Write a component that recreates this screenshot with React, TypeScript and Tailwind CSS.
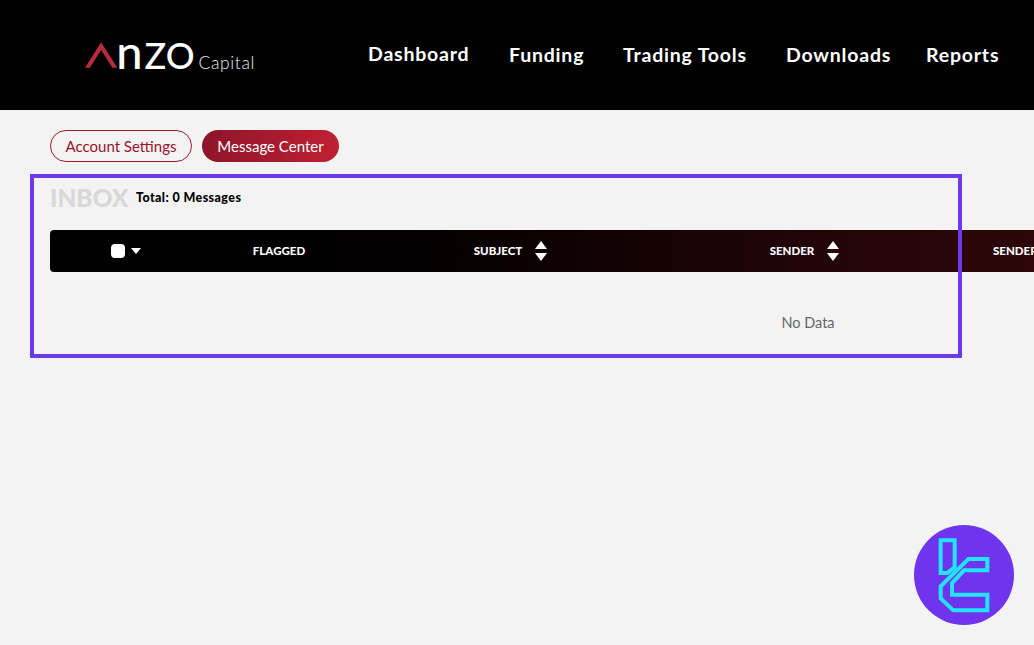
import React from 'react';

const font = { fontFamily: 'Lato, "Noto Sans", sans-serif' };

const navItems = [
  { label: 'Dashboard', className: 'w-[102px] -mt-[2px]' },
  { label: 'Funding', className: 'w-[74px] ml-[39px]' },
  { label: 'Trading Tools', className: 'w-[125px] ml-[40px]' },
  { label: 'Downloads', className: 'w-[104px] ml-[38px] -mt-[1px]' },
  { label: 'Reports', className: 'w-[72px] ml-[36px] -mt-[1px]' },
];

const SortArrows = () => (
  <svg width="14" height="20" viewBox="0 0 14 20" className="ml-3">
    <path d="M7 0 L13 8 L1 8 Z M1 12 L13 12 L7 20 Z" fill="#fff" />
  </svg>
);

const Logo = () => (
  <div className="flex items-baseline w-[170px] ml-[85px] mt-[-9px] h-[50px] text-white">
    <svg width="33" height="26" viewBox="0 0 33 26" className="self-end mb-[8px]">
      <path d="M0 26 L16.5 0 L33 26 L28 26 L16.5 8 L5 26 Z" fill="#b92a3c" />
    </svg>
    <span className="ml-[-1px] text-[47px] leading-[50px] font-medium">n</span>
    <span className="ml-[2px] text-[36px] leading-[50px] font-medium">ZO</span>
    <span className="ml-[4px] text-[17.5px] leading-[50px] font-light text-[#efefef] tracking-[0.6px]">Capital</span>
  </div>
);

const Badge = () => (
  <svg width="100" height="100" viewBox="42 30 300 300" className="absolute left-[914px] top-[525px]">
    <circle cx="192" cy="180" r="150" fill="#6f35ee" />
    <g fill="none" stroke="#22e4ff" strokeWidth="12">
      <path d="M122 76 L164 76 L164 156 L142 174 L122 174 Z" />
      <path d="M205 132 L262 132 L262 166 L192 166 L156 204 L156 239 L262 239 L262 286 L160 286 L122 250 L122 214 Z" />
    </g>
  </svg>
);

export default function App() {
  return (
    <div className="relative w-[1034px] h-[645px] overflow-hidden bg-[#f3f3f3]" style={font}>
      <header className="flex items-center h-[110px] bg-black">
        <Logo />
        <nav className="flex items-center ml-[113px] text-white text-[19.5px] font-bold tracking-[0.8px] whitespace-nowrap">
          {navItems.map(item => (
            <a key={item.label} className={item.className}>{item.label}</a>
          ))}
        </nav>
      </header>

      <main className="pl-[50px]">
        <div className="flex gap-[10px] pt-5">
          <button className="w-[142px] h-8 rounded-full border border-[#a3182f] text-[15px] leading-[28px] text-[#98142b]">
            Account Settings
          </button>
          <button className="w-[137px] h-8 rounded-full bg-gradient-to-r from-[#8e1429] to-[#c02033] text-[15px] leading-[30px] text-white">
            Message Center
          </button>
        </div>

        <div className="flex items-center h-6 mt-[24px]">
          <h1 className="w-[86px] text-[24.5px] leading-6 font-black text-[#dad7d7]">INBOX</h1>
          <span className="text-[12.5px] font-black text-black tracking-[0.4px]">Total: 0 Messages</span>
        </div>

        <div className="w-[1516px] mt-[20px]">
          <div className="flex items-center h-[42px] rounded-l-[4px] bg-gradient-to-r from-black from-[3%] via-[#220508] via-[50%] to-[#45080d] text-white text-[11.5px] font-black">
            <div className="flex items-center justify-center w-[152px]">
              <span className="w-[14px] h-[14px] rounded-[4px] bg-white" />
              <svg width="10" height="6" viewBox="0 0 10 6" className="ml-[6px]">
                <path d="M0 0 L10 0 L5 6 Z" fill="#fff" />
              </svg>
            </div>
            <div className="flex items-center justify-center w-[154px]">FLAGGED</div>
            <div className="flex items-center justify-center w-[310px]">SUBJECT<SortArrows /></div>
            <div className="flex items-center justify-center w-[278px]">SENDER<SortArrows /></div>
            <div className="pl-[49px]">SENDER</div>
          </div>
          <div className="pt-[40px] text-center text-[14.5px] text-[#666]">No Data</div>
        </div>
      </main>

      <div className="absolute left-[30px] top-[174px] w-[932px] h-[184px] border-4 border-[#6c3ae8]" />
      <Badge />
    </div>
  );
}
